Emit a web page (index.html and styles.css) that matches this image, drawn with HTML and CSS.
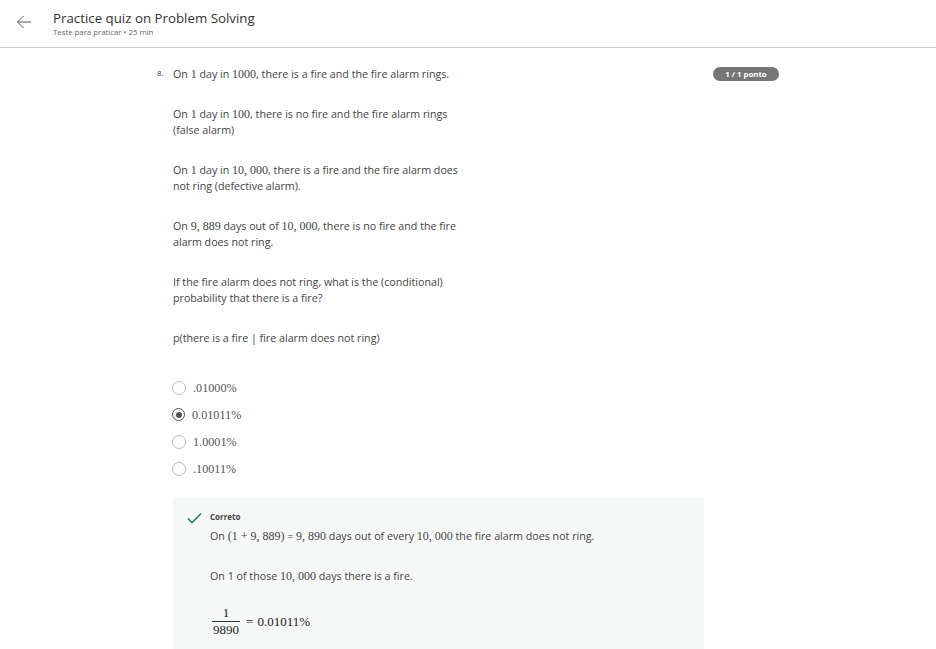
FILE: index.html
```html
<!DOCTYPE html>
<html lang="pt">
<head>
<meta charset="utf-8">
<title>Practice quiz on Problem Solving</title>
<link rel="stylesheet" href="styles.css">
</head>
<body>
<header class="top">
  <button class="back" aria-label="Voltar">
    <svg width="16" height="14" viewBox="0 0 16 14"><path d="M15 7H1.5M7.5 1L1.5 7l6 6" fill="none" stroke="#555" stroke-width="1"/></svg>
  </button>
  <div class="titles">
    <h1 class="title">Practice quiz on Problem Solving</h1>
    <div class="sub">Teste para praticar • 25 min</div>
  </div>
</header>
<main class="quiz">
  <div class="question">
    <div class="num">8.</div>
    <div class="qbody">
      <p>On <span class="m">1</span> day in <span class="m">1000</span>, there is a fire and the fire alarm rings.</p>
      <p>On <span class="m">1</span> day in <span class="m">100</span>, there is no fire and the fire alarm rings<br>(false alarm)</p>
      <p>On <span class="m">1</span> day in <span class="m">10, 000</span>, there is a fire and the fire alarm does<br>not ring (defective alarm).</p>
      <p>On <span class="m">9, 889</span> days out of <span class="m">10, 000</span>, there is no fire and the fire<br>alarm does not ring.</p>
      <p>If the fire alarm does not ring, what is the (conditional)<br>probability that there is a fire?</p>
      <p>p(there is a fire | fire alarm does not ring)</p>
      <ul class="options">
        <li class="opt"><span class="radio"></span><span class="m">.01000%</span></li>
        <li class="opt"><span class="radio on"></span><span class="m">0.01011%</span></li>
        <li class="opt"><span class="radio"></span><span class="m">1.0001%</span></li>
        <li class="opt"><span class="radio"></span><span class="m">.10011%</span></li>
      </ul>
      <div class="feedback">
        <svg class="check" width="15" height="12" viewBox="0 0 15 12"><path d="M1 6.5l4 4L14 1.5" fill="none" stroke="#2a8556" stroke-width="1.7"/></svg>
        <div class="fbody">
          <div class="ok">Correto</div>
          <p>On <span class="m">(1 + 9, 889)</span> = <span class="m">9, 890</span> days out of every <span class="m">10, 000</span> the fire alarm does not ring.</p>
          <p>On 1 of those <span class="m">10, 000</span> days there is a fire.</p>
          <div class="eq">
            <span class="frac"><span class="n">1</span><span class="d">9890</span></span>
            <span class="res">=&nbsp;0.01011%</span>
          </div>
        </div>
      </div>
    </div>
    <div class="badge">1 / 1 ponto</div>
  </div>
</main>
</body>
</html>
```
FILE: styles.css
```css
html, body { margin: 0; padding: 0; background: #fff; }
body { font-family: "Open Sans", "Liberation Sans", sans-serif; color: #444; }

.top {
  display: flex;
  align-items: flex-start;
  height: 47px;
  border-bottom: 1px solid #c9c9c9;
}
.back {
  border: 0; background: none; padding: 0;
  margin: 15px 0 0 16px;
  width: 16px; height: 14px;
  display: flex;
}
.titles { margin: 9px 0 0 21px; }
.title {
  margin: 0;
  font-size: 13.3px;
  font-weight: 400;
  color: #333;
  line-height: 18px;
}
.sub { font-size: 7.8px; color: #666; line-height: 9px; margin-top: 1px; }

.quiz { padding-top: 18px; }
.question { display: flex; align-items: flex-start; padding-left: 157px; }
.num { width: 16px; font-size: 8px; line-height: 14px; color: #444; }
.qbody { width: 530px; font-size: 10.7px; line-height: 16px; }
.qbody p { margin: 0 0 24px; }
.m { font-family: "Liberation Serif", "DejaVu Serif", serif; font-size: 12px; }

.options { list-style: none; margin: 28px 0 0; padding: 0; }
.opt { display: flex; align-items: center; height: 27px; color: #555; }
.opt .m { font-size: 12.2px; }
.radio {
  width: 12px; height: 12px; border-radius: 50%;
  border: 1px solid #bbb; margin: 0 7px 0 -1px;
  position: relative; flex: none;
}
.radio.on { border-color: #555; border-width: 1.5px; width: 11px; height: 11px; }
.radio.on::after {
  content: ""; position: absolute; left: 2.5px; top: 2.5px;
  width: 6px; height: 6px; border-radius: 50%; background: #555;
}

.feedback {
  display: flex; align-items: flex-start;
  margin-top: 16px;
  width: 531px;
  background: #f6f8f8;
  padding: 14px 0 20px 14px;
  box-sizing: border-box;
}
.check { flex: none; }
.fbody { margin-left: 8px; }
.ok { font-size: 8px; font-weight: 700; color: #444; line-height: 10px; }
.fbody p { margin: 6px 0 24px; color: #444; }
.fbody p + p { margin: 0 0 20px; }
.eq { display: flex; align-items: center; margin-left: 3px; }
.frac {
  display: inline-flex; flex-direction: column; align-items: center;
  font-family: "Liberation Serif", "DejaVu Serif", serif; font-size: 13px; color: #222;
  margin-right: 7px;
}
.frac .n { line-height: 17px; padding: 0 1px; border-bottom: 1px solid #333; width: 100%; text-align: center; }
.frac .d { line-height: 16px; }
.res { font-family: "Liberation Serif", "DejaVu Serif", serif; font-size: 13px; color: #222; margin-top: 2px; word-spacing: 1px; }

.badge {
  margin-left: 10px;
  margin-top: 1px;
  width: 66px; height: 14px; line-height: 14px;
  border-radius: 7px;
  background: #767676; color: #fff;
  font-size: 7.8px; font-weight: 700; text-align: center;
  flex: none;
}
```
